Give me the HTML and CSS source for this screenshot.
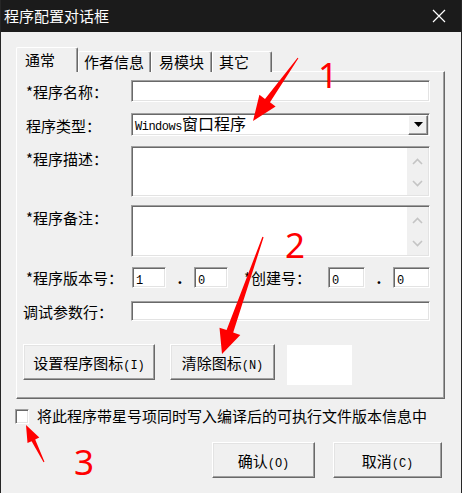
FILE: index.html
```html
<!DOCTYPE html>
<html lang="zh-CN">
<head>
    <meta charset="UTF-8">
    <meta name="viewport" content="width=device-width, initial-scale=1.0">
    <link rel="stylesheet" href="styles.css">
</head>
<body>

<div class="window">
    <div class="titlebar">
        <span class="title">程序配置对话框</span>
        <svg class="close" width="14" height="14" viewBox="0 0 14 14">
            <path d="M1 1 L13 13 M13 1 L1 13" stroke="#ffffff" stroke-width="1.2" fill="none"/>
        </svg>
    </div>

    <div class="client">
        <div class="tabs">
            <div class="tab tab-general active">通常</div>
            <div class="tab tab-author">作者信息</div>
            <div class="tab tab-module">易模块</div>
            <div class="tab tab-other">其它</div>
        </div>

        <div class="panel">
            <div class="row row-name">
                <label class="lbl">*程序名称：</label>
                <div class="input field"></div>
            </div>
            <div class="row row-type">
                <label class="lbl">程序类型：</label>
                <div class="input field combo">
                    <span class="combo-text"><span class="en-combo">Windows</span>窗口程序</span>
                    <span class="combo-btn">
                        <svg width="9" height="5" viewBox="0 0 9 5"><path d="M0 0 H9 L4.5 5 Z" fill="#000"/></svg>
                    </span>
                </div>
            </div>
            <div class="row row-desc">
                <label class="lbl">*程序描述：</label>
                <div class="input field memo">
                    <div class="vscroll">
                        <svg width="11" height="7" viewBox="0 0 11 7"><path d="M1 6 L5.5 1.5 L10 6" stroke="#c4c4c4" stroke-width="1.6" fill="none"/></svg>
                        <svg width="11" height="7" viewBox="0 0 11 7"><path d="M1 1 L5.5 5.5 L10 1" stroke="#c4c4c4" stroke-width="1.6" fill="none"/></svg>
                    </div>
                </div>
            </div>
            <div class="row row-remark">
                <label class="lbl">*程序备注：</label>
                <div class="input field memo">
                    <div class="vscroll">
                        <svg width="11" height="7" viewBox="0 0 11 7"><path d="M1 6 L5.5 1.5 L10 6" stroke="#c4c4c4" stroke-width="1.6" fill="none"/></svg>
                        <svg width="11" height="7" viewBox="0 0 11 7"><path d="M1 1 L5.5 5.5 L10 1" stroke="#c4c4c4" stroke-width="1.6" fill="none"/></svg>
                    </div>
                </div>
            </div>
            <div class="row row-ver">
                <label class="lbl">*程序版本号：</label>
                <div class="input num num-major"><span class="en">1</span></div>
                <span class="dot">.</span>
                <div class="input num num-minor"><span class="en">0</span></div>
                <label class="lbl-build">*创建号：</label>
                <div class="input num num-build"><span class="en">0</span></div>
                <span class="dot">.</span>
                <div class="input num num-build"><span class="en">0</span></div>
            </div>
            <div class="row row-debug">
                <label class="lbl lbl-debug">调试参数行：</label>
                <div class="input field"></div>
            </div>
            <div class="row row-icon">
                <button class="btn btn-seticon">设置程序图标<span class="en">(I)</span></button>
                <button class="btn btn-clearicon">清除图标<span class="en">(N)</span></button>
                <div class="icon-box"></div>
            </div>
        </div>

        <div class="check-row">
            <span class="checkbox"></span>
            <span class="check-text">将此程序带星号项同时写入编译后的可执行文件版本信息中</span>
        </div>

        <div class="footer">
            <button class="btn btn-ok">确认<span class="en">(O)</span></button>
            <button class="btn btn-cancel">取消<span class="en">(C)</span></button>
        </div>
    </div>

    <!-- red annotation marks drawn over the dialog -->
    <svg class="marks" width="462" height="493" viewBox="0 0 462 493">
        <polygon fill="#ff0000" points="298.4,58.3 270,102.3 275.6,106.4 253,121 259.4,94.8 265,98.9 297.6,57.7"/>
        <polygon fill="#ff0000" points="263.6,237.2 233.2,332.5 240.3,334.9 222,354 219.5,327.7 226.6,330.1 262.4,236.8"/>
        <polygon fill="#ff0000" points="44.45,461.8 35.2,439.4 39.3,437.5 26,425 27.5,443.1 31.6,441.2 43.55,462.2"/>
        <text class="mark-num" x="328" y="88" text-anchor="middle">1</text>
        <text class="mark-num" x="295" y="258" text-anchor="middle">2</text>
        <text class="mark-num" x="84" y="475" text-anchor="middle">3</text>
    </svg>
</div>

</body>
</html>
```

FILE: styles.css
```css
* {
    box-sizing: border-box;
}

body {
    margin: 0;
    font-family: "Noto Sans CJK SC", "Noto Sans", sans-serif;
    font-size: 15px;
    color: #000;
    background-color: #f0f0f0;
}

.en {
    font-family: "Liberation Mono", monospace;
    font-size: 12px;
}

.window {
    position: relative;
    width: 462px;
    height: 493px;
    background-color: #f0f0f0;
    border-left: 1px solid #262626;
    border-right: 1px solid #262626;
}

.titlebar {
    height: 32px;
    background-color: #1b1b1b;
    color: #fff;
    display: flex;
    align-items: center;
    justify-content: space-between;
    padding: 0 15px 0 3px;
}

.title {
    font-size: 15px;
    line-height: 20px;
}

.client {
    padding: 15px 0 0 15px;
}

/* tabs */
.tabs {
    display: flex;
    align-items: flex-end;
    height: 25px;
    position: relative;
    z-index: 1;
}

.tab {
    height: 21px;
    line-height: 20px;
    padding-left: 5px;
    background-color: #f0f0f0;
    border-top: 1px solid #fff;
    border-left: 1px solid #fff;
    border-right: 1px solid #696969;
    box-shadow: inset -1px 0 #a0a0a0;
    border-radius: 2px 2px 0 0;
}

.tab.active {
    height: 25px;
    line-height: 24px;
    padding-left: 8px;
}

.tab-general { width: 62px; }
.tab-author { width: 73px; }
.tab-module { width: 61px; padding-left: 7px; }
.tab-other { width: 60px; padding-left: 6px; }

/* panel */
.panel {
    width: 429px;
    height: 328px;
    margin-top: -1px;
    padding-left: 9px;
    border-top: 1px solid #fff;
    border-left: 1px solid #fff;
    border-right: 1px solid #696969;
    border-bottom: 1px solid #696969;
    box-shadow: inset -1px -1px #a0a0a0;
}

.row {
    display: flex;
    align-items: flex-start;
}

.lbl {
    width: 105px;
    flex-shrink: 0;
    line-height: 22px;
    padding-top: 1px;
    white-space: nowrap;
}

.lbl-debug {
    margin-left: -3px;
    width: 108px;
    line-height: 20px;
}

.input {
    background-color: #fff;
    border: 1px solid;
    border-color: #a0a0a0 #fff #fff #a0a0a0;
    box-shadow: inset 1px 1px #696969, inset -1px -1px #e3e3e3;
}

.field {
    width: 299px;
}

.row-name { margin-top: 8px; }
.row-name .input { height: 22px; }

.row-type { margin-top: 10px; }
.row-type .lbl { line-height: 23px; }

.combo {
    height: 23px;
    display: flex;
    align-items: center;
    justify-content: space-between;
    padding: 0 1px 0 3px;
}

.combo-text {
    font-size: 16px;
    line-height: 20px;
}

.en-combo {
    font-family: "Liberation Mono", monospace;
    font-size: 12px;
    letter-spacing: -0.5px;
}

.combo-btn {
    width: 20px;
    height: 20px;
    display: flex;
    align-items: center;
    justify-content: center;
    background-color: #f0f0f0;
    border: 1px solid;
    border-color: #fff #696969 #696969 #fff;
    box-shadow: inset -1px -1px #a0a0a0;
}

.row-desc { margin-top: 9px; }
.row-desc .memo { height: 51px; }
.row-remark { margin-top: 8px; }
.row-remark .memo { height: 52px; }

.row-desc .lbl,
.row-remark .lbl {
    padding-top: 2px;
}

.memo {
    display: flex;
    justify-content: flex-end;
    padding: 1px 1px 1px 0;
}

.vscroll {
    width: 21px;
    background-color: #f0f0f0;
    display: flex;
    flex-direction: column;
    align-items: center;
    justify-content: space-between;
    padding: 10px 0 8px;
}

.row-ver {
    margin-top: 9px;
    align-items: center;
}

.row-ver .lbl {
    line-height: 21px;
}

.num {
    height: 21px;
    line-height: 19px;
    padding-left: 3px;
}

.num-major { width: 34px; margin-left: 1px; }
.num-minor { width: 34px; }
.num-build { width: 37px; }

.dot {
    width: 28px;
    text-align: center;
    font-weight: bold;
    font-size: 15px;
    line-height: 21px;
}

.lbl-build {
    width: 84px;
    margin-left: 16px;
    white-space: nowrap;
    line-height: 21px;
}

.row-debug { margin-top: 13px; }
.row-debug .input { height: 20px; }

.row-icon {
    margin-top: 22px;
    margin-left: -3px;
}

/* buttons */
.btn {
    font-family: "Noto Sans CJK SC", sans-serif;
    font-size: 15px;
    color: #000;
    height: 36px;
    padding: 0;
    background-color: #f0f0f0;
    border: 1px solid;
    border-color: #fff #696969 #696969 #fff;
    box-shadow: inset -1px -1px #a0a0a0, inset 1px 1px #e3e3e3;
}

.btn-seticon { width: 132px; }
.btn-clearicon { width: 105px; margin-left: 15px; }

.icon-box {
    width: 65px;
    height: 40px;
    margin: 1px 0 0 12px;
    background-color: #fff;
}

/* bottom */
.check-row {
    margin-top: 9px;
    margin-left: -1px;
    display: flex;
    align-items: center;
    height: 16px;
}

.checkbox {
    width: 14px;
    height: 15px;
    background-color: #fff;
    border: 1px solid;
    border-color: #a0a0a0 #fff #fff #a0a0a0;
    box-shadow: inset 1px 1px #696969, inset -1px -1px #e3e3e3;
}

.check-text {
    margin-left: 8px;
    line-height: 16px;
}

.footer {
    margin-top: 18px;
    display: flex;
    justify-content: flex-end;
    padding-right: 19px;
}

.btn-ok { width: 103px; }
.btn-cancel { width: 109px; margin-left: 18px; }

/* annotations */
.marks {
    position: absolute;
    top: 0;
    left: -1px;
    pointer-events: none;
}

.mark-num {
    font-family: "Noto Sans", sans-serif;
    font-size: 35px;
    fill: #ff0000;
}
```
